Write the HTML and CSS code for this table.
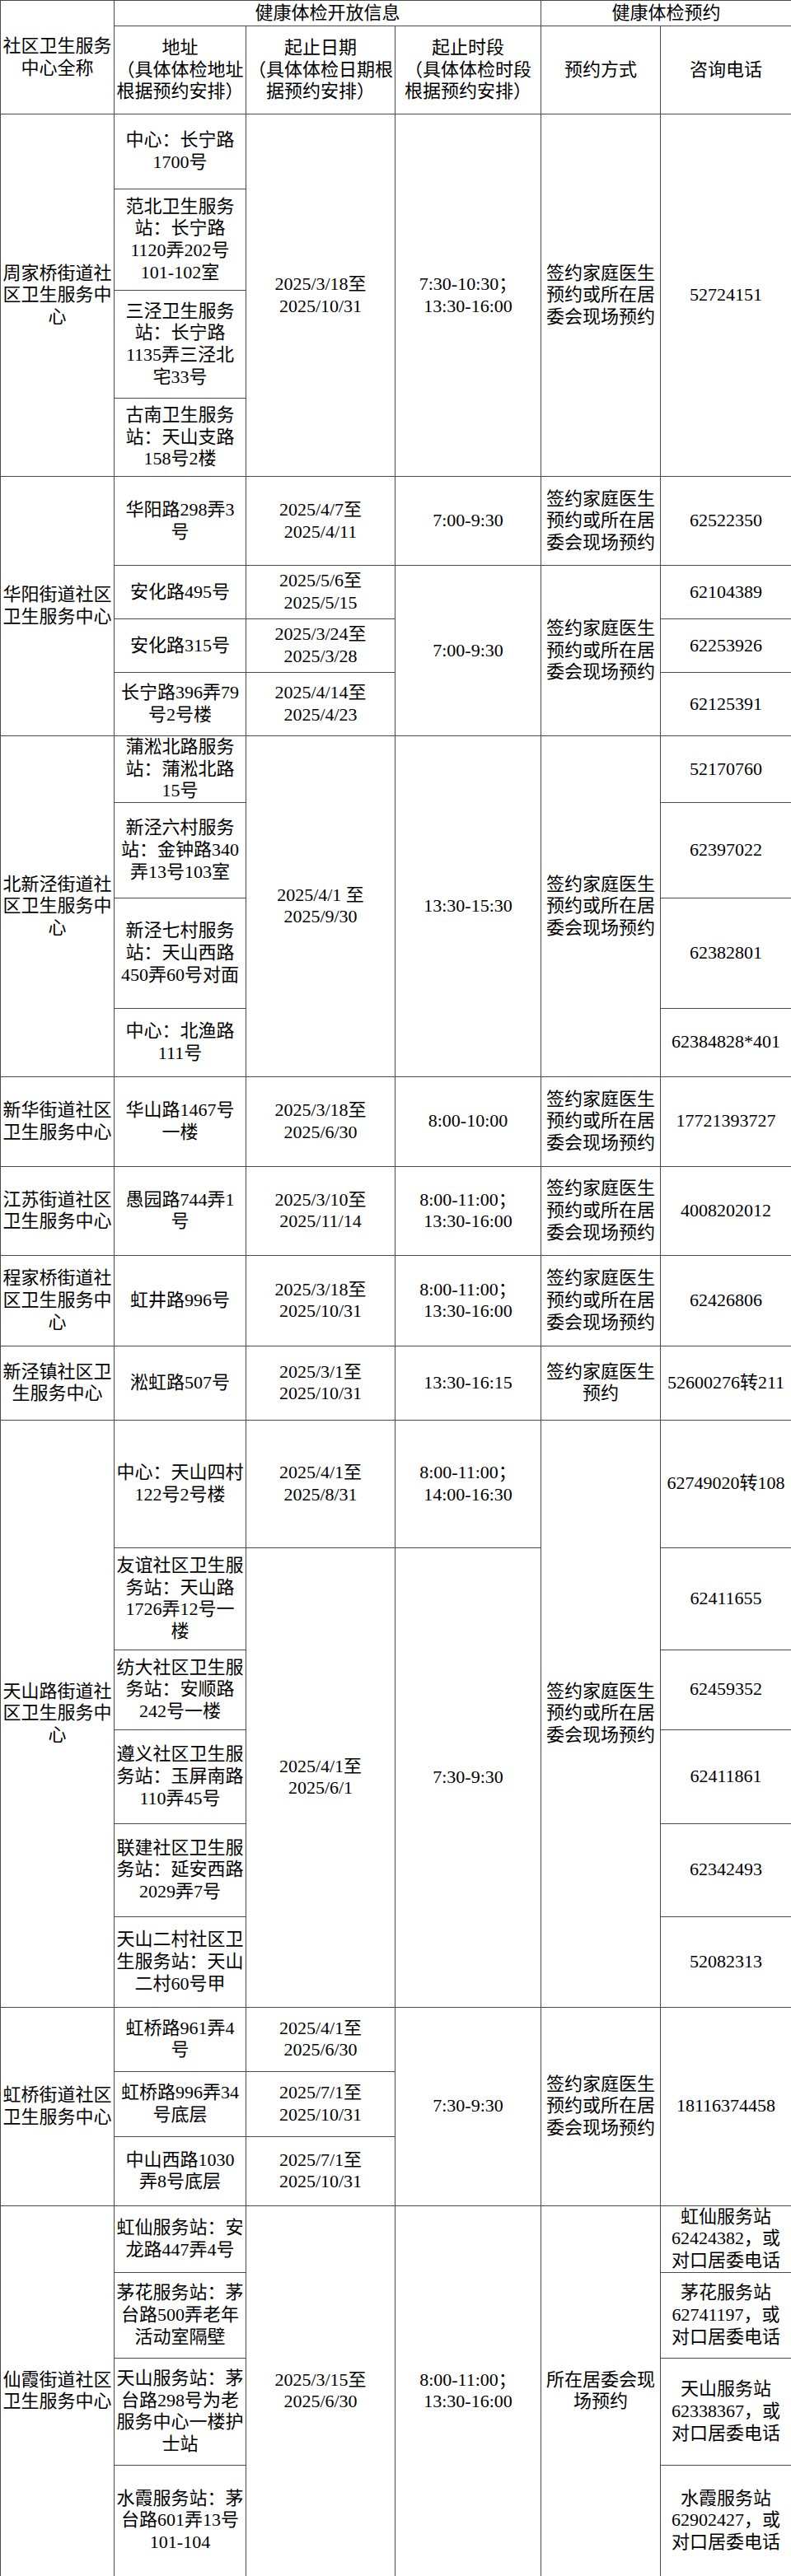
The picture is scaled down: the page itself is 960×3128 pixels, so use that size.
FILE: index.html
```html
<!DOCTYPE html>
<html lang="zh-CN">
<head>
<meta charset="utf-8">
<title>健康体检开放信息</title>
<link rel="stylesheet" href="styles.css">
</head>
<body>
<table class="sched">
<colgroup>
<col class="c-name"><col class="c-addr"><col class="c-date"><col class="c-time"><col class="c-way"><col class="c-tel">
</colgroup>
<thead>
<tr class="h31">
<th rowspan="2">社区卫生服务<br>中心全称</th>
<th colspan="3">健康体检开放信息</th>
<th colspan="2">健康体检预约</th>
</tr>
<tr class="h107">
<th>地址<br>（具体体检地址<br>根据预约安排）</th>
<th>起止日期<br>（具体体检日期根<br>据预约安排）</th>
<th>起止时段<br>（具体体检时段<br>根据预约安排）</th>
<th>预约方式</th>
<th>咨询电话</th>
</tr>
</thead>
<tbody>
<tr class="h91">
<td rowspan="4">周家桥街道社<br>区卫生服务中<br>心</td>
<td>中心：长宁路<br>1700号</td>
<td rowspan="4">2025/3/18至<br>2025/10/31</td>
<td rowspan="4">7:30-10:30；<br>13:30-16:00</td>
<td rowspan="4">签约家庭医生<br>预约或所在居<br>委会现场预约</td>
<td rowspan="4">52724151</td>
</tr>
<tr class="h123"><td>范北卫生服务<br>站：长宁路<br>1120弄202号<br>101-102室</td></tr>
<tr class="h131"><td>三泾卫生服务<br>站：长宁路<br>1135弄三泾北<br>宅33号</td></tr>
<tr class="h95"><td>古南卫生服务<br>站：天山支路<br>158号2楼</td></tr>

<tr class="h108">
<td rowspan="4">华阳街道社区<br>卫生服务中心</td>
<td>华阳路298弄3<br>号</td>
<td>2025/4/7至<br>2025/4/11</td>
<td>7:00-9:30</td>
<td>签约家庭医生<br>预约或所在居<br>委会现场预约</td>
<td>62522350</td>
</tr>
<tr class="h65">
<td>安化路495号</td>
<td>2025/5/6至<br>2025/5/15</td>
<td rowspan="3">7:00-9:30</td>
<td rowspan="3">签约家庭医生<br>预约或所在居<br>委会现场预约</td>
<td>62104389</td>
</tr>
<tr class="h65">
<td>安化路315号</td>
<td>2025/3/24至<br>2025/3/28</td>
<td>62253926</td>
</tr>
<tr class="h77">
<td>长宁路396弄79<br>号2号楼</td>
<td>2025/4/14至<br>2025/4/23</td>
<td>62125391</td>
</tr>

<tr class="h80">
<td rowspan="4">北新泾街道社<br>区卫生服务中<br>心</td>
<td>蒲淞北路服务<br>站：蒲淞北路<br>15号</td>
<td rowspan="4">2025/4/1 至<br>2025/9/30</td>
<td rowspan="4">13:30-15:30</td>
<td rowspan="4">签约家庭医生<br>预约或所在居<br>委会现场预约</td>
<td>52170760</td>
</tr>
<tr class="h116"><td>新泾六村服务<br>站：金钟路340<br>弄13号103室</td><td>62397022</td></tr>
<tr class="h134"><td>新泾七村服务<br>站：天山西路<br>450弄60号对面</td><td>62382801</td></tr>
<tr class="h83"><td>中心：北渔路<br>111号</td><td>62384828*401</td></tr>

<tr class="h109">
<td>新华街道社区<br>卫生服务中心</td>
<td>华山路1467号<br>一楼</td>
<td>2025/3/18至<br>2025/6/30</td>
<td>8:00-10:00</td>
<td>签约家庭医生<br>预约或所在居<br>委会现场预约</td>
<td>17721393727</td>
</tr>
<tr class="h108">
<td>江苏街道社区<br>卫生服务中心</td>
<td>愚园路744弄1<br>号</td>
<td>2025/3/10至<br>2025/11/14</td>
<td>8:00-11:00；<br>13:30-16:00</td>
<td>签约家庭医生<br>预约或所在居<br>委会现场预约</td>
<td>4008202012</td>
</tr>
<tr class="h110">
<td>程家桥街道社<br>区卫生服务中<br>心</td>
<td>虹井路996号</td>
<td>2025/3/18至<br>2025/10/31</td>
<td>8:00-11:00；<br>13:30-16:00</td>
<td>签约家庭医生<br>预约或所在居<br>委会现场预约</td>
<td>62426806</td>
</tr>
<tr class="h90">
<td>新泾镇社区卫<br>生服务中心</td>
<td>淞虹路507号</td>
<td>2025/3/1至<br>2025/10/31</td>
<td>13:30-16:15</td>
<td>签约家庭医生<br>预约</td>
<td>52600276转211</td>
</tr>

<tr class="h155">
<td rowspan="6">天山路街道社<br>区卫生服务中<br>心</td>
<td>中心：天山四村<br>122号2号楼</td>
<td>2025/4/1至<br>2025/8/31</td>
<td>8:00-11:00；<br>14:00-16:30</td>
<td rowspan="6">签约家庭医生<br>预约或所在居<br>委会现场预约</td>
<td>62749020转108</td>
</tr>
<tr class="h124">
<td>友谊社区卫生服<br>务站：天山路<br>1726弄12号一<br>楼</td>
<td rowspan="5">2025/4/1至<br>2025/6/1</td>
<td rowspan="5">7:30-9:30</td>
<td>62411655</td>
</tr>
<tr class="h97"><td>纺大社区卫生服<br>务站：安顺路<br>242号一楼</td><td>62459352</td></tr>
<tr class="h114"><td>遵义社区卫生服<br>务站：玉屏南路<br>110弄45号</td><td>62411861</td></tr>
<tr class="h113"><td>联建社区卫生服<br>务站：延安西路<br>2029弄7号</td><td>62342493</td></tr>
<tr class="h110"><td>天山二村社区卫<br>生服务站：天山<br>二村60号甲</td><td>52082313</td></tr>

<tr class="h78">
<td rowspan="3">虹桥街道社区<br>卫生服务中心</td>
<td>虹桥路961弄4<br>号</td>
<td>2025/4/1至<br>2025/6/30</td>
<td rowspan="3">7:30-9:30</td>
<td rowspan="3">签约家庭医生<br>预约或所在居<br>委会现场预约</td>
<td rowspan="3">18116374458</td>
</tr>
<tr class="h79"><td>虹桥路996弄34<br>号底层</td><td>2025/7/1至<br>2025/10/31</td></tr>
<tr class="h84"><td>中山西路1030<br>弄8号底层</td><td>2025/7/1至<br>2025/10/31</td></tr>

<tr class="h81">
<td rowspan="4">仙霞街道社区<br>卫生服务中心</td>
<td>虹仙服务站：安<br>龙路447弄4号</td>
<td rowspan="4">2025/3/15至<br>2025/6/30</td>
<td rowspan="4">8:00-11:00；<br>13:30-16:00</td>
<td rowspan="4">所在居委会现<br>场预约</td>
<td>虹仙服务站<br>62424382，或<br>对口居委电话</td>
</tr>
<tr class="h104"><td>茅花服务站：茅<br>台路500弄老年<br>活动室隔壁</td><td>茅花服务站<br>62741197，或<br>对口居委电话</td></tr>
<tr class="h130"><td>天山服务站：茅<br>台路298号为老<br>服务中心一楼护<br>士站</td><td>天山服务站<br>62338367，或<br>对口居委电话</td></tr>
<tr class="h135"><td>水霞服务站：茅<br>台路601弄13号<br>101-104</td><td>水霞服务站<br>62902427，或<br>对口居委电话</td></tr>
</tbody>
</table>
</body>
</html>
```

FILE: styles.css
```css
html, body {
  margin: 0;
  padding: 0;
  background: #ffffff;
}

.sched {
  width: 960px;
  border-collapse: collapse;
  table-layout: fixed;
  font-family: "Liberation Serif", "Noto Sans CJK SC", serif;
  font-size: 22px;
  line-height: 26.6px;
  color: #000000;
}

.c-name { width: 138px; }
.c-addr { width: 160px; }
.c-date { width: 181px; }
.c-time { width: 177px; }
.c-way  { width: 145px; }
.c-tel  { width: 159px; }

.sched th,
.sched td {
  border: 1px solid #4a4a4a;
  padding: 0 1px;
  text-align: center;
  vertical-align: middle;
  white-space: nowrap;
  font-weight: normal;
  overflow: visible;
}

.h31 { height: 31px; }
.h65 { height: 65px; }
.h77 { height: 77px; }
.h78 { height: 78px; }
.h79 { height: 79px; }
.h80 { height: 80px; }
.h81 { height: 81px; }
.h83 { height: 83px; }
.h84 { height: 84px; }
.h90 { height: 90px; }
.h91 { height: 91px; }
.h95 { height: 95px; }
.h97 { height: 97px; }
.h104 { height: 104px; }
.h107 { height: 107px; }
.h108 { height: 108px; }
.h109 { height: 109px; }
.h110 { height: 110px; }
.h113 { height: 113px; }
.h114 { height: 114px; }
.h116 { height: 116px; }
.h123 { height: 123px; }
.h124 { height: 124px; }
.h130 { height: 130px; }
.h131 { height: 131px; }
.h134 { height: 134px; }
.h135 { height: 135px; }
.h155 { height: 155px; }
```
